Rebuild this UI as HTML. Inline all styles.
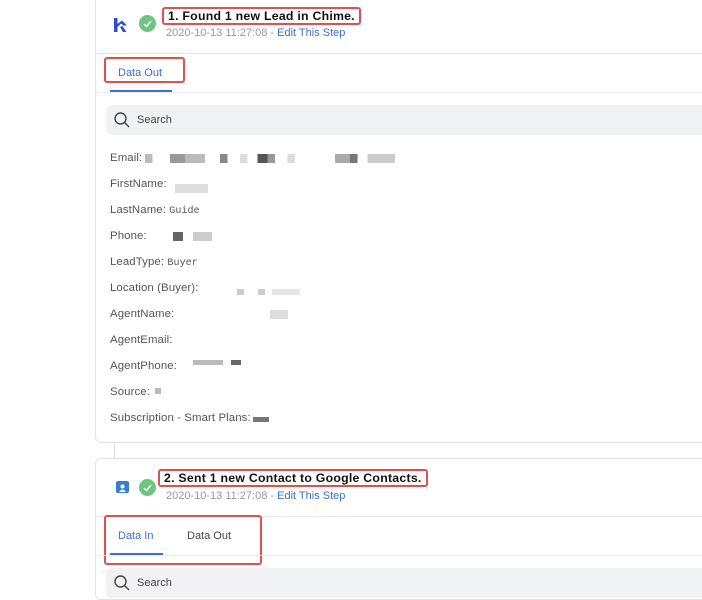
<!DOCTYPE html><html><head><style>
body{margin:0;width:702px;height:589px;background:#fff;position:relative;overflow:hidden;font-family:"Liberation Sans",sans-serif}
.a{position:absolute}
.card{position:absolute;left:95px;width:620px;border:1px solid #e3e3e3;border-radius:6px;background:#fff}
.lbl{position:absolute;left:110px;font-size:11.4px;color:#555;letter-spacing:0.1px}
.mono{font-family:"Liberation Mono",monospace;font-size:10px;color:#555}
.px{position:absolute;height:9px}
.t{font-size:12.3px;font-weight:bold;color:#111;border:2px solid #d9534f;border-radius:3px;padding:0 4px;line-height:14px;letter-spacing:0.25px}
.d{font-size:11px;color:#999}
.d span{color:#3b6fd4}
.rb{position:absolute;border:2px solid #d9534f;border-radius:3px}
.tab{position:absolute;font-size:11px}
.sr{position:absolute;left:106px;width:600px;height:30px;background:#f1f2f4;border-radius:5px}
</style></head><body>
<div class="card" style="top:-10px;height:451px"></div>
<div class="a" style="left:114px;top:442px;width:1px;height:16px;background:#ddd"></div>
<div class="card" style="top:458px;height:140px"></div>

<svg class="a" style="left:112px;top:17px" width="18" height="16"><path d="M2 1 L5.5 1 L5.5 7 L10 3.5 L15 8.5 L11.5 8.5 L9 6.5 L5.5 10 L5.5 15 L2 15Z" fill="#2f4bd0"/><path d="M8 10 L11 15 L14.5 15 L10.5 9Z" fill="#2f4bd0"/></svg>
<div class="a" style="left:139px;top:15px;width:17px;height:17px;border-radius:50%;background:#6cc785"><svg width="17" height="17"><path d="M5 9 L7.5 11.5 L12 6" stroke="#fff" stroke-width="1.5" fill="none"/></svg></div>
<div class="a t" style="left:162px;top:7px">1. Found 1 new Lead in Chime.</div>
<div class="a d" style="left:166px;top:27px">2020-10-13 11:27:08 - <span>Edit This Step</span></div>
<div class="a" style="left:96px;top:53px;width:610px;height:1px;background:#e6e6e6"></div>
<div class="rb" style="left:104px;top:57px;width:77px;height:22px"></div>
<div class="tab" style="left:118px;top:67px;color:#3b6fd4">Data Out</div>
<div class="a" style="left:110px;top:90px;width:62px;height:2px;background:#3b6fd4"></div>
<div class="a" style="left:96px;top:92px;width:610px;height:1px;background:#eee"></div>
<div class="sr" style="top:105px"></div>
<svg class="a" style="left:113px;top:111px" width="18" height="18"><circle cx="7.5" cy="7.5" r="5.5" stroke="#444" stroke-width="1.4" fill="none"/><path d="M11.5 11.5 L16 16" stroke="#444" stroke-width="1.5"/></svg>
<div class="a" style="left:137px;top:114px;font-size:11px;color:#444">Search</div>

<div class="lbl" style="top:152px">Email:</div>
<div class="px" style="left:145px;top:154px;width:250px;background:linear-gradient(90deg,#bbb 0 3%,#fff 3% 10%,#999 10% 16%,#bbb 16% 24%,#fff 24% 30%,#888 30% 33%,#fff 33% 38%,#ddd 38% 41%,#fff 41% 45%,#555 45% 49%,#999 49% 52%,#fff 52% 57%,#ddd 57% 60%,#fff 60% 76%,#aaa 76% 82%,#777 82% 85%,#fff 85% 89%,#ccc 89% 100%)"></div>
<div class="lbl" style="top:178px">FirstName:</div>
<div class="px" style="left:175px;top:184px;width:33px;background:#ddd"></div>
<div class="lbl" style="top:204px">LastName: <span class="mono">Guide</span></div>
<div class="lbl" style="top:230px">Phone:</div>
<div class="px" style="left:173px;top:232px;width:10px;background:#666"></div>
<div class="px" style="left:193px;top:232px;width:19px;background:#ccc"></div>
<div class="lbl" style="top:256px">LeadType: <span class="mono">Buyer</span></div>
<div class="lbl" style="top:282px">Location (Buyer):</div>
<div class="px" style="left:230px;top:289px;width:70px;height:6px;background:linear-gradient(90deg,#fff 0 10%,#ccc 10% 20%,#fff 20% 40%,#ccc 40% 50%,#fff 50% 60%,#e5e5e5 60% 100%)"></div>
<div class="lbl" style="top:308px">AgentName:</div>
<div class="px" style="left:270px;top:310px;width:18px;background:#ddd"></div>
<div class="lbl" style="top:334px">AgentEmail:</div>
<div class="lbl" style="top:360px">AgentPhone:</div>
<div class="px" style="left:193px;top:360px;width:30px;height:5px;background:#bbb"></div>
<div class="px" style="left:231px;top:360px;width:10px;height:5px;background:#666"></div>
<div class="lbl" style="top:386px">Source:</div>
<div class="px" style="left:155px;top:388px;width:6px;height:6px;background:#bbb"></div>
<div class="lbl" style="top:412px">Subscription - Smart Plans:</div>
<div class="px" style="left:253px;top:417px;width:16px;height:5px;background:#777"></div>

<div class="a" style="left:116px;top:481px;width:13px;height:12px;background:#3a7bd5;border-radius:2px"><svg width="13" height="12"><circle cx="6.5" cy="4.5" r="2" fill="#fff"/><path d="M3 10 Q6.5 5 10 10Z" fill="#fff"/></svg></div>
<div class="a" style="left:139px;top:479px;width:17px;height:17px;border-radius:50%;background:#6cc785"><svg width="17" height="17"><path d="M5 9 L7.5 11.5 L12 6" stroke="#fff" stroke-width="1.5" fill="none"/></svg></div>
<div class="a t" style="left:158px;top:469px">2. Sent 1 new Contact to Google Contacts.</div>
<div class="a d" style="left:166px;top:490px">2020-10-13 11:27:08 - <span>Edit This Step</span></div>
<div class="a" style="left:96px;top:516px;width:610px;height:1px;background:#e6e6e6"></div>
<div class="rb" style="left:104px;top:515px;width:154px;height:46px"></div>
<div class="tab" style="left:118px;top:530px;color:#3b6fd4">Data In</div>
<div class="tab" style="left:187px;top:530px;color:#444">Data Out</div>
<div class="a" style="left:110px;top:553px;width:53px;height:2px;background:#3b6fd4"></div>
<div class="a" style="left:96px;top:555px;width:610px;height:1px;background:#eee"></div>
<div class="sr" style="top:568px"></div>
<svg class="a" style="left:113px;top:574px" width="18" height="18"><circle cx="7.5" cy="7.5" r="5.5" stroke="#444" stroke-width="1.4" fill="none"/><path d="M11.5 11.5 L16 16" stroke="#444" stroke-width="1.5"/></svg>
<div class="a" style="left:137px;top:577px;font-size:11px;color:#444">Search</div>
</body></html>
